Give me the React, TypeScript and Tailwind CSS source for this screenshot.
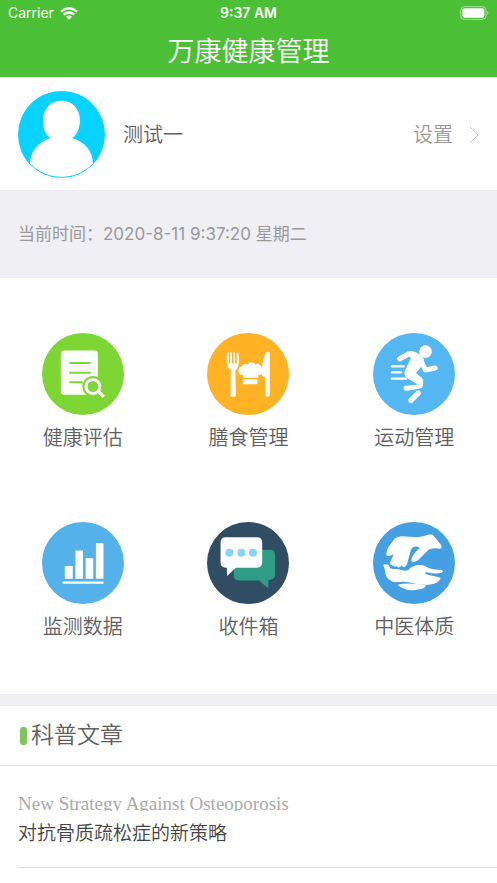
import { useState } from "react";
import type { ReactNode } from "react";

const ReportIcon = () => (
  <svg viewBox="0 0 248 248" className="h-full w-full" aria-hidden="true">
    <circle cx="124" cy="124" r="124" fill="#7ed635" />
    <rect x="57" y="53" width="112" height="134" rx="10" fill="#fff" />
    <path d="M85 91h60M85 120h60M85 149h36" stroke="#7ed635" strokeWidth="6" strokeLinecap="round" />
    <circle cx="154" cy="162" r="32" fill="#7ed635" />
    <circle cx="154" cy="162" r="21" fill="none" stroke="#fff" strokeWidth="9" />
    <path d="M171 177l16 16" stroke="#fff" strokeWidth="10" />
  </svg>
);

const DietIcon = () => (
  <svg viewBox="0 0 248 248" className="h-full w-full" aria-hidden="true">
    <circle cx="124" cy="124" r="124" fill="#ffb224" />
    <g fill="#fff">
      <path d="M60 91q-2-16 1-29 3-8 5 0v30h4V61q2-9 5 0v31h5V61q3-9 5 0v31h5V62q3-8 5 0 3 14 1 30-1 15-10 21l1 76q0 4-4 4H75q-4 0-4-4l1-76q-11-6-12-22z" />
      <path d="M109 135v-8c-18 1-19-24-2-27 3-8 11-9 17-5 4-9 18-9 22 0 7-4 15-2 17 6 16 4 12 26-8 26v8z" />
      <rect x="108" y="140" width="45" height="15" rx="4" />
      <path d="M190 62v126q0 5-6 5-7 0-7-5v-53q-12-3-11-12 0-42 11-61 9-12 13 0z" />
    </g>
  </svg>
);

const SportIcon = () => (
  <svg viewBox="0 0 248 248" className="h-full w-full" aria-hidden="true">
    <circle cx="124" cy="124" r="124" fill="#55b7f1" />
    <circle cx="159" cy="56" r="19" fill="#fff" />
    <path d="M109 56Q122 52 137 62Q151 69 154 82L152 94L130 122L146 134Q155 142 151 158L148 166L134 162L133 154L103 136Q90 126 97 113L114 78Z" fill="#fff" />
    <g fill="none" stroke="#fff" strokeLinecap="round" strokeLinejoin="round">
      <path d="M81 78L108 63L122 65" strokeWidth="16" />
      <path d="M144 82L159 112L188 106" strokeWidth="15" />
      <path d="M141 159Q138 163 130 164L100 167" strokeWidth="15" />
      <path d="M137 182L115 204" strokeWidth="16" />
      <path d="M57 101h36M57 119h28M57 138h43" strokeWidth="7" />
    </g>
    <path d="M112 176L149 169" stroke="#55b7f1" strokeWidth="4" />
  </svg>
);

const ChartIcon = () => (
  <svg viewBox="0 0 248 248" className="h-full w-full" aria-hidden="true">
    <circle cx="124" cy="124" r="124" fill="#55b1e9" />
    <path d="M69 133h24v39H69zM101 86h23v86h-23zM132 110h23v62h-23zM163 64h23v108h-23zM62 180h124v7H62z" fill="#fff" />
  </svg>
);

const InboxIcon = () => (
  <svg viewBox="0 0 248 248" className="h-full w-full" aria-hidden="true">
    <circle cx="124" cy="124" r="124" fill="#304d64" />
    <path d="M97 84h93q16 0 16 16v61q0 12-20 15l-1 24-28-23H97q-16 0-16-16V100q0-16 16-16z" fill="#2f9d85" />
    <path d="M57 46h94q16 0 16 16v60q0 16-16 16H87l-26 25-1-25h-3q-16 0-16-16V62q0-16 16-16z" fill="#fff" />
    <g fill="#84d5f7">
      <circle cx="68" cy="93" r="12" />
      <circle cx="104" cy="93" r="12" />
      <circle cx="139" cy="93" r="12" />
    </g>
  </svg>
);

const HandsIcon = () => (
  <svg viewBox="0 0 248 248" className="h-full w-full" aria-hidden="true">
    <circle cx="124" cy="124" r="124" fill="#45a0e3" />
    <g fill="#fff">
      <path d="M40 99Q40 90 46 76L66 50Q72 44 86 43L135 46Q148 45 170 38Q180 36 184 42L207 71Q210 77 204 81Q184 77 168 84L138 114Q126 123 118 121Q114 117 119 105Q125 91 143 79Q133 71 120 77Q114 82 111 98L103 127Q98 139 91 136L87 131Q82 139 75 137L71 133Q66 137 58 131Q51 130 52 122L63 97Q54 103 47 103Q41 103 40 99Z" />
      <path d="M31 130Q36 126 48 130Q50 142 61 142Q78 141 88 146Q98 149 108 145Q113 136 131 131Q148 128 158 134Q170 142 181 143L208 145Q214 149 208 153Q190 159 168 153L161 152Q155 154 160 158L199 167Q206 168 203 173Q197 184 178 188Q159 192 134 188Q112 182 92 181L66 182Q42 176 38 158Q37 143 31 130Z" />
      <path d="M76 188Q117 183 160 191Q162 197 146 203Q111 212 84 197Q75 192 76 188Z" />
    </g>
  </svg>
);

const menus: { label: string; icon: ReactNode }[] = [
  { label: "健康评估", icon: <ReportIcon /> },
  { label: "膳食管理", icon: <DietIcon /> },
  { label: "运动管理", icon: <SportIcon /> },
  { label: "监测数据", icon: <ChartIcon /> },
  { label: "收件箱", icon: <InboxIcon /> },
  { label: "中医体质", icon: <HandsIcon /> },
];

const articles = [{ id: 1, en: "New Strategy Against Osteoporosis", title: "对抗骨质疏松症的新策略" }];

function StatusBar() {
  return (
    <div className="grid h-[26px] grid-cols-3 items-center px-2 text-[14px] leading-4">
      <div className="flex items-center gap-1.5">
        <span>Carrier</span>
        <svg viewBox="0 0 54 39" className="h-[13px] w-[18px]" aria-hidden="true">
          <g fill="none" stroke="#fff" strokeWidth="7">
            <path d="M3 14Q27-7 51 14" />
            <path d="M11 23q16-13 32 0" />
          </g>
          <path d="M18 29q9-7 18 0l-9 9z" fill="#fff" />
        </svg>
      </div>
      <span className="text-center font-semibold">9:37 AM</span>
      <svg viewBox="0 0 87 42" className="h-[14px] w-[29px] justify-self-end" aria-hidden="true">
        <rect x="2" y="2" width="76" height="38" rx="11" fill="none" stroke="#fff" strokeOpacity=".5" strokeWidth="3" />
        <rect x="7" y="7" width="66" height="28" rx="6" fill="#fff" />
        <path d="M82 15q6 6 0 12z" fill="#fff" fillOpacity=".6" />
      </svg>
    </div>
  );
}

export default function App() {
  const [now] = useState("2020-8-11 9:37:20 星期二");

  return (
    <div className="min-h-screen bg-white font-['Inter','Noto_Sans_CJK_SC',sans-serif] font-[350] text-[#606060]">
      <header className="bg-[#4bc036] pb-1.5 font-normal text-white">
        <StatusBar />
        <h1 className="pt-1.5 text-center text-[27px] leading-[39px] font-[350]">万康健康管理</h1>
      </header>

      {/* User info */}
      <section className="flex h-[113px] items-center px-[18px] pt-0.5">
        <svg viewBox="0 0 260 260" className="h-[87px] w-[87px]" role="img" aria-label="头像">
          <circle cx="130" cy="130" r="130" fill="#08d2ff" />
          <path d="M97 141C80 129 75 111 75 86c0-33 23-57 55-57s55 24 55 57c0 25-7 43-22 55 36 11 60 36 61 76-50 53-138 53-188 0 1-39 25-65 61-76z" fill="#fff" />
        </svg>
        <p className="ml-[18px] flex-1 text-[20px]">测试一</p>
        <a href="#settings" className="flex items-center gap-4 text-[20px] text-[#999]">
          设置
          <svg viewBox="0 0 10 18" className="h-[18px] w-[10px]" aria-hidden="true">
            <path d="M1 1l8 8-8 8" fill="none" stroke="#c8c8cc" strokeWidth="1" />
          </svg>
        </a>
      </section>

      <p className="bg-[#efeff4] px-[18px] py-8 text-[17px] leading-6 font-normal text-[#999]">当前时间：{now}</p>

      {/* Menu grid */}
      <nav className="grid grid-cols-3 gap-y-[71px] pt-[55px] pb-[54px]">
        {menus.map((item) => (
          <button key={item.label} type="button" className="flex flex-col items-center gap-2.5">
            <span className="h-[82px] w-[82px]">{item.icon}</span>
            <span className="text-[20px] leading-[26px]">{item.label}</span>
          </button>
        ))}
      </nav>

      {/* Articles */}
      <section className="border-t-12 border-[#efeff4]">
        <h2 className="flex h-[60px] items-center gap-1 border-b border-[#ddd] px-5 text-[23px]">
          <span className="h-[18px] w-[7px] rounded-[3px] bg-[#7bc75c]" />
          科普文章
        </h2>
        <ul className="pl-[18px]">
          {articles.map((item) => (
            <li key={item.id} className="border-b border-[#ddd] pt-7 pb-5">
              <a href="#article" className="block">
                <span className="block h-[17px] overflow-hidden font-['Liberation_Serif',serif] text-[19px] leading-5 font-normal text-[#aaa]">
                  {item.en}
                </span>
                <span className="mt-2.5 block text-[19px] leading-[26px] text-[#444]">{item.title}</span>
              </a>
            </li>
          ))}
        </ul>
      </section>
    </div>
  );
}
